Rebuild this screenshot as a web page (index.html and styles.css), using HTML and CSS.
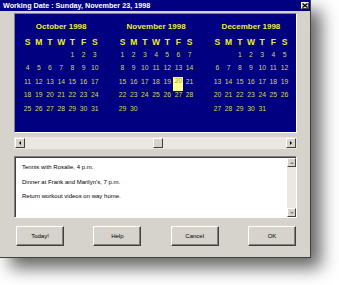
FILE: index.html
```html
<!DOCTYPE html>
<html lang="en">
<head>
    <meta charset="UTF-8">
    <meta name="viewport" content="width=device-width, initial-scale=1.0">
    <title>Working Date</title>
    <link rel="stylesheet" href="styles.css">
</head>
<body>

    <div class="window">
        <div class="titlebar">
            <span class="title">Working Date : Sunday, November 23, 1998</span>
            <span class="close-btn">
                <svg width="6" height="5" viewBox="0 0 6 5"><path d="M0.5 0.5 L5.5 4.5 M5.5 0.5 L0.5 4.5" stroke="#000" stroke-width="1.2"/></svg>
            </span>
        </div>

        <div class="content">
            <!-- calendar months get filled in by the script below -->
            <div class="calendar" id="calendar"></div>

            <div class="hscroll">
                <span class="scroll-btn"><span class="tri tri-left"></span></span>
                <div class="hscroll-track"><span class="thumb"></span></div>
                <span class="scroll-btn"><span class="tri tri-right"></span></span>
            </div>

            <div class="notes">
                <div class="notes-text">
                    <p>Tennis with Rosalie, 4 p.m.</p>
                    <p>Dinner at Frank and Marilyn's, 7 p.m.</p>
                    <p>Return workout videos on way home.</p>
                </div>
                <div class="vscroll">
                    <span class="scroll-btn"><span class="tri tri-up"></span></span>
                    <div class="vscroll-track"></div>
                    <span class="scroll-btn"><span class="tri tri-down"></span></span>
                </div>
            </div>

            <div class="buttons">
                <button type="button">Today!</button>
                <button type="button">Help</button>
                <button type="button">Cancel</button>
                <button type="button">OK</button>
            </div>
        </div>
    </div>

    <script>
        const months = [
            { name: 'October 1998', start: 4, days: 31 },
            { name: 'November 1998', start: 0, days: 30, selected: 20 },
            { name: 'December 1998', start: 2, days: 31 }
        ];

        const calendar = document.getElementById('calendar');

        months.forEach(month => {
            const monthDiv = document.createElement('div');
            monthDiv.classList.add('month');

            let html = `<div class="month-name">${month.name}</div><div class="days">`;
            ['S', 'M', 'T', 'W', 'T', 'F', 'S'].forEach(d => {
                html += `<span class="dow">${d}</span>`;
            });
            for (let i = 0; i < month.start; i++) {
                html += '<span></span>';
            }
            for (let day = 1; day <= month.days; day++) {
                if (day === month.selected) {
                    html += `<span class="day"><span class="selected">${day}</span></span>`;
                } else {
                    html += `<span class="day">${day}</span>`;
                }
            }
            html += '</div>';

            monthDiv.innerHTML = html;
            calendar.appendChild(monthDiv);
        });
    </script>
</body>
</html>
```

FILE: styles.css
```css
body {
    margin: 0;
    width: 339px;
    height: 285px;
    overflow: hidden;
    background: #fff;
    font-family: 'Liberation Sans', Arial, sans-serif;
}

.window {
    width: 311px;
    height: 258px;
    box-sizing: border-box;
    background: #d6d2cc;
    border-right: 1px solid #404040;
    border-bottom: 1px solid #404040;
    box-shadow: 10px 10px 16px rgba(0, 0, 0, 0.6);
    display: flex;
    flex-direction: column;
}

.titlebar {
    height: 11px;
    background: #000080;
    color: #fff;
    display: flex;
    align-items: center;
    justify-content: space-between;
    padding: 0 1px 0 3px;
}

.title {
    font-size: 7.2px;
    font-weight: bold;
    white-space: nowrap;
}

.close-btn {
    width: 8px;
    height: 7px;
    box-sizing: border-box;
    background: #d6d2cc;
    border: 1px solid;
    border-color: #fff #404040 #404040 #fff;
    display: flex;
    align-items: center;
    justify-content: center;
}

.content {
    padding: 2px 13px 0 14px;
    display: flex;
    flex-direction: column;
}

/* calendar panel */
.calendar {
    height: 120px;
    box-sizing: border-box;
    background: #000080;
    border: 1px solid;
    border-color: #808080 #fff #fff #808080;
    display: flex;
    gap: 16.6px;
    padding: 8px 0 0 7px;
    color: #eeee30;
}

.month-name {
    font-size: 8px;
    font-weight: bold;
    line-height: 10px;
    text-align: center;
    white-space: nowrap;
}

.days {
    display: grid;
    grid-template-columns: repeat(7, 11.2px);
    grid-template-rows: 9.5px;
    grid-auto-rows: 13.5px;
    margin-top: 6.25px;
}

.days span {
    text-align: center;
}

.dow {
    font-size: 8.5px;
    font-weight: bold;
    line-height: 9.5px;
    color: #f0f020;
}

.day {
    font-size: 6.8px;
    line-height: 13.5px;
    color: #d6d658;
    display: flex;
    justify-content: center;
}

.selected {
    width: 10px;
    height: 14px;
    margin-top: 2.5px;
    line-height: 8px;
    background: #ffff8c;
    color: #9a9a3a;
    text-align: center;
}

/* scrollbars */
.hscroll {
    margin-top: 4px;
    height: 12px;
    box-sizing: border-box;
    padding: 1px;
    background: #ebe8e3;
    display: flex;
}

.hscroll-track {
    flex: 1;
    position: relative;
}

.thumb {
    position: absolute;
    left: 128px;
    top: 0;
    width: 10px;
    height: 10px;
    box-sizing: border-box;
    background: #d6d2cc;
    border: 1px solid;
    border-color: #fff #404040 #404040 #fff;
}

.scroll-btn {
    width: 10px;
    height: 10px;
    box-sizing: border-box;
    background: #d6d2cc;
    border: 1px solid;
    border-color: #fff #404040 #404040 #fff;
    display: flex;
    align-items: center;
    justify-content: center;
}

.tri {
    width: 0;
    height: 0;
    border: 2px solid transparent;
}

.tri-left {
    border-right-color: #000;
    border-left-width: 0;
}

.tri-right {
    border-left-color: #000;
    border-right-width: 0;
}

.tri-up {
    border-bottom-color: #808080;
    border-top-width: 0;
}

.tri-down {
    border-top-color: #808080;
    border-bottom-width: 0;
}

/* notes box */
.notes {
    margin-top: 7px;
    height: 62px;
    box-sizing: border-box;
    background: #fff;
    border: 1px solid;
    border-color: #808080 #fff #fff #808080;
    box-shadow: inset 1px 1px 0 #404040;
    display: flex;
}

.notes-text {
    flex: 1;
    padding: 3px 0 0 7px;
    font-size: 6px;
    color: #000;
}

.notes-text p {
    margin: 0;
    line-height: 14.5px;
    white-space: nowrap;
}

.vscroll {
    width: 9px;
    margin: 1px 0 0 0;
    background: #ebe8e3;
    display: flex;
    flex-direction: column;
}

.vscroll .scroll-btn {
    width: 9px;
    height: 9px;
}

.vscroll-track {
    flex: 1;
}

/* buttons */
.buttons {
    margin-top: 8px;
    padding: 0 1px 0 2px;
    display: flex;
    justify-content: space-between;
}

button {
    width: 48px;
    height: 20px;
    padding: 0;
    background: #d6d2cc;
    border: 1px solid;
    border-color: #fff #404040 #404040 #fff;
    box-shadow: inset -1px -1px 0 #808080;
    font-family: 'Liberation Sans', Arial, sans-serif;
    font-size: 6px;
    color: #000;
}
```
